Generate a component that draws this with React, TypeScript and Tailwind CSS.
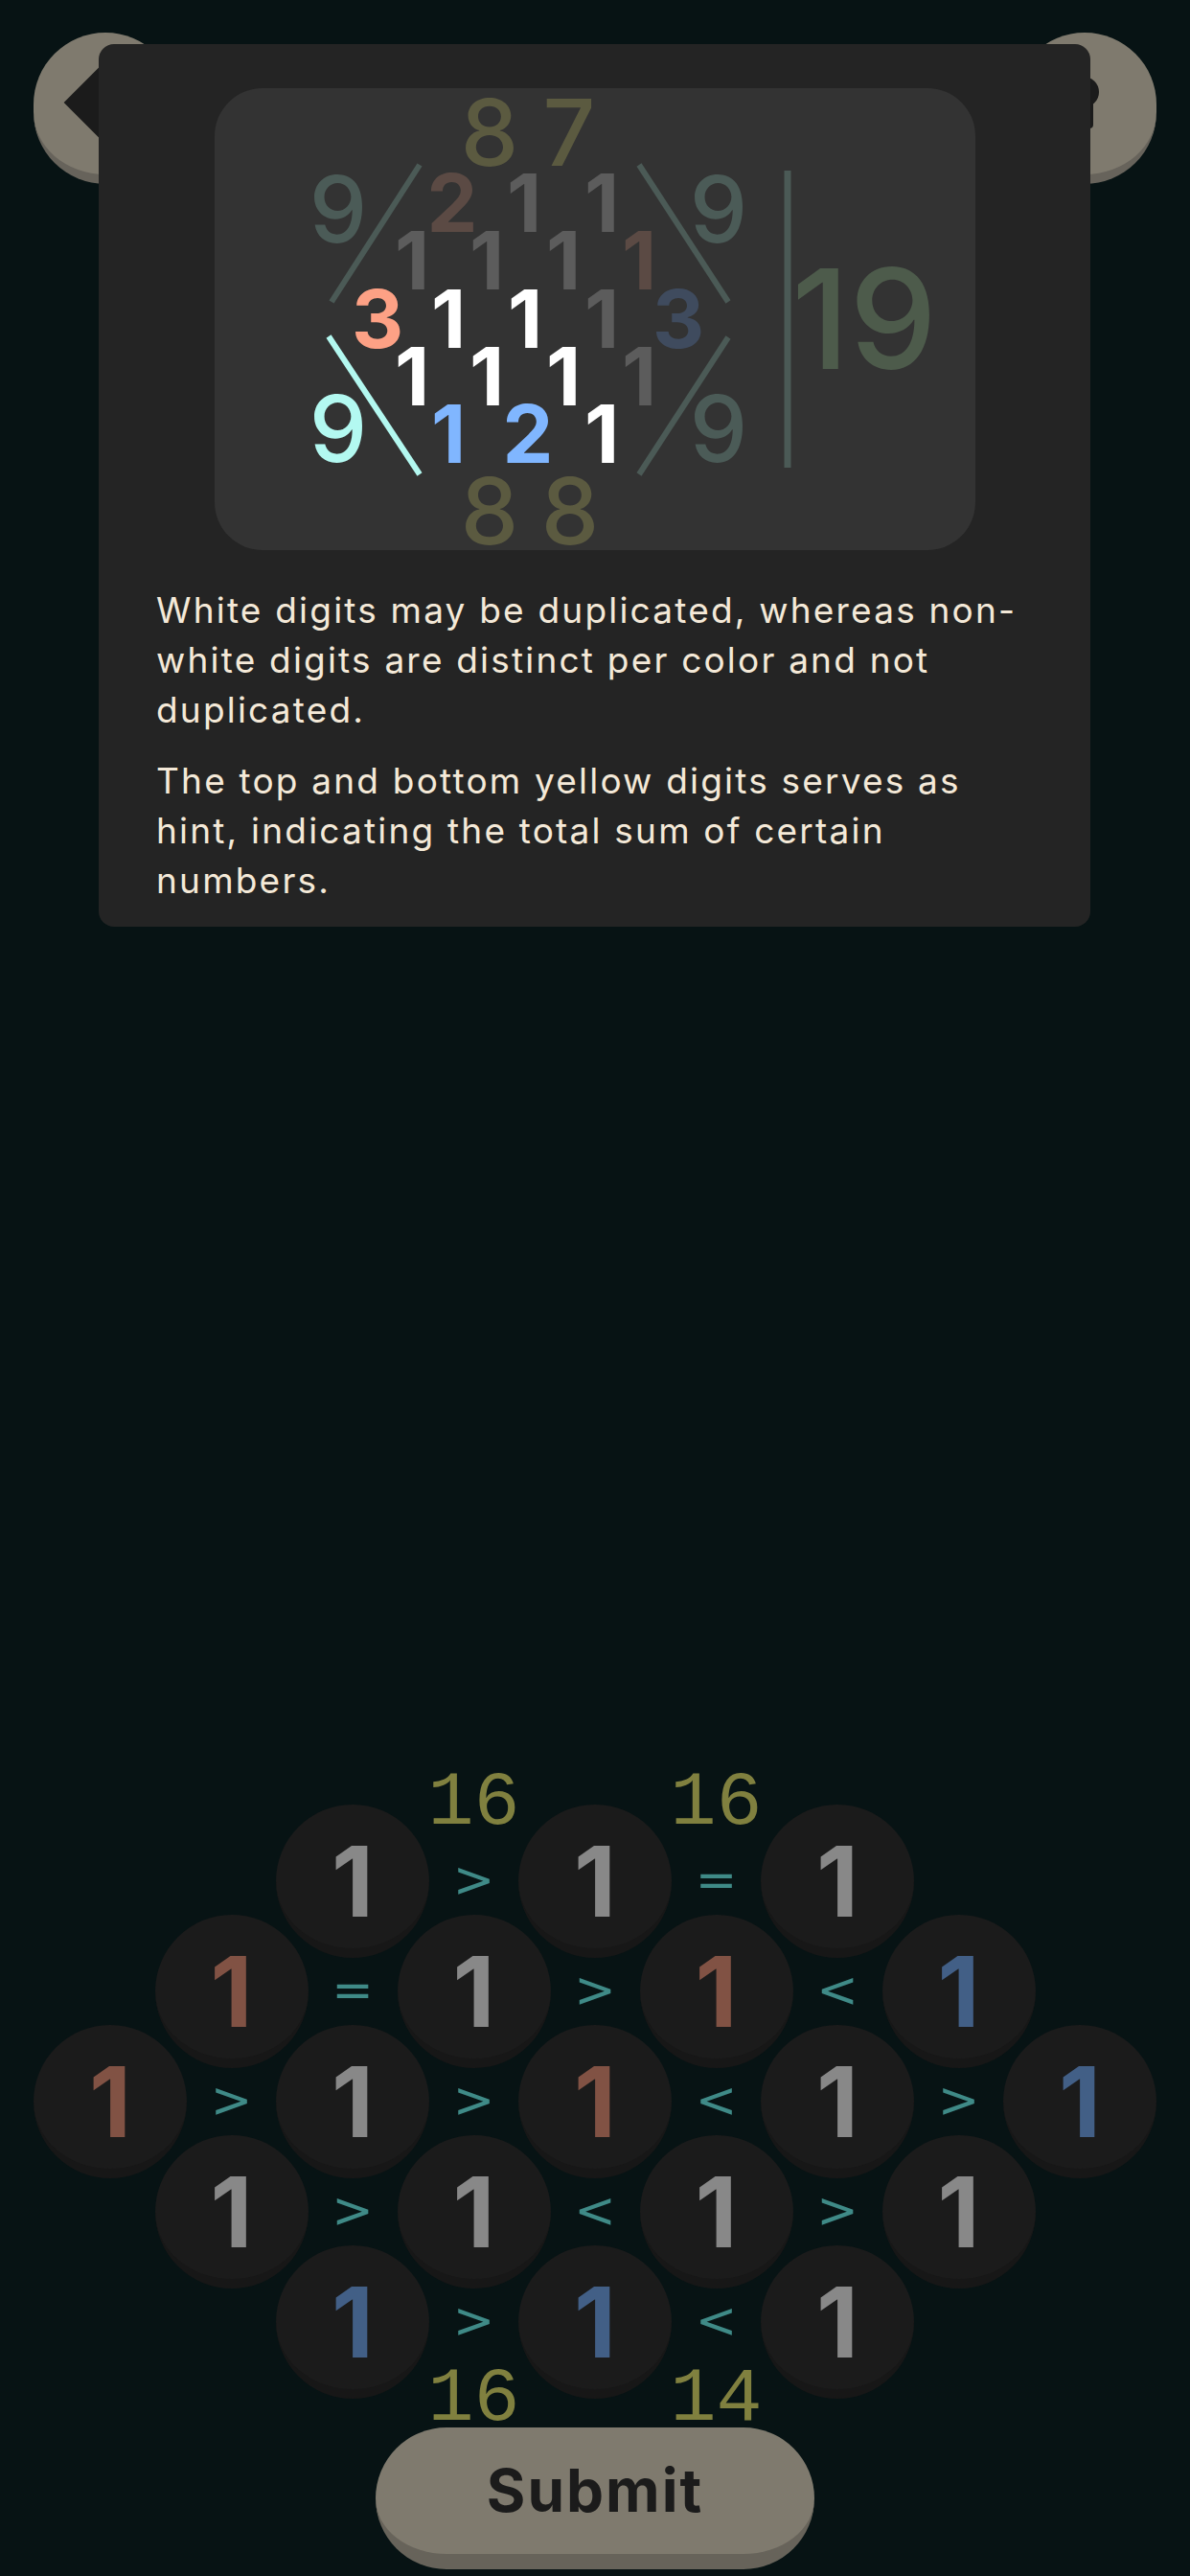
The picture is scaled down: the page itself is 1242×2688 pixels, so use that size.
import React from 'react';

type Tone = 'g' | 'r' | 'b';

const TONE: Record<Tone, string> = {
    g: 'text-[#888888]',
    r: 'text-[#815244]',
    b: 'text-[#425f86]',
};

const ROWS: { cells: Tone[]; ops: string[] }[] = [
    { cells: ['g', 'g', 'g'], ops: ['>', '='] },
    { cells: ['r', 'g', 'r', 'b'], ops: ['=', '>', '<'] },
    { cells: ['r', 'g', 'r', 'g', 'b'], ops: ['>', '>', '<', '>'] },
    { cells: ['g', 'g', 'g', 'g'], ops: ['>', '<', '>'] },
    { cells: ['b', 'b', 'g'], ops: ['>', '<'] },
];

// digits of the tutorial picture: [text, x, y, colour]
const GRID: [string, number, number, string][] = [
    ['2', 472, 242, '#5b4a44'], ['1', 547, 242, '#5c5c5c'], ['1', 628, 242, '#5c5c5c'],
    ['1', 430, 302, '#5c5c5c'], ['1', 508, 302, '#5c5c5c'], ['1', 588, 302, '#5c5c5c'], ['1', 667, 302, '#5b4a44'],
    ['3', 394, 363, '#fda185'], ['1', 468, 363, '#ffffff'], ['1', 548, 363, '#ffffff'], ['1', 628, 363, '#5c5c5c'], ['3', 708, 363, '#3f4b5e'],
    ['1', 430, 423, '#ffffff'], ['1', 508, 423, '#ffffff'], ['1', 588, 423, '#ffffff'], ['1', 667, 423, '#5c5c5c'],
    ['1', 468, 483, '#80b6ff'], ['2', 551, 483, '#80b6ff'], ['1', 628, 483, '#ffffff'],
];

const EDGE: [string, number, number, string][] = [
    ['8', 511, 173, '#5b5a40'], ['7', 594, 173, '#5b5a40'],
    ['8', 511, 568, '#5b5a40'], ['8', 595, 568, '#5b5a40'],
    ['9', 353, 253, '#4b5b57'], ['9', 353, 482, '#b3f9f1'],
    ['9', 750, 253, '#4b5b57'], ['9', 750, 482, '#4b5b57'],
];

const TutorialPicture = () => (
    <svg viewBox="224 92 794 482" className="w-[794px] h-[482px] block" style={{ fontFamily: 'Inter, sans-serif' }}>
        <rect x="224" y="92" width="794" height="482" rx="50" fill="#333333" />
        <line x1="438" y1="172" x2="346" y2="315" stroke="#4b5a56" strokeWidth="6" />
        <line x1="343" y1="351" x2="438" y2="495" stroke="#b3f8f0" strokeWidth="6" />
        <line x1="667" y1="172" x2="760" y2="315" stroke="#4b5a56" strokeWidth="6" />
        <line x1="760" y1="352" x2="667" y2="495" stroke="#4b5a56" strokeWidth="6" />
        <line x1="822" y1="178" x2="822" y2="488" stroke="#4b5a56" strokeWidth="7" />
        {EDGE.map(([t, x, y, c], i) => (
            <text key={'e' + i} x={x} y={y} fill={c} fontSize="96" fontWeight="500" textAnchor="middle">{t}</text>
        ))}
        {GRID.map(([t, x, y, c], i) => (
            <text key={'g' + i} x={x} y={y} fill={c} fontSize="84" fontWeight="700" textAnchor="middle">{t}</text>
        ))}
        <text x="902" y="385" fill="#4d5b4b" fontSize="145" fontWeight="500" textAnchor="middle">19</text>
    </svg>
);

const Cell = ({ tone }: { tone: Tone }) => (
    <div className="w-[160px] h-[160px] shrink-0 rounded-full bg-[#1b1b1b] border-b-[10px] border-[#171717] flex items-center justify-center pt-[10px]">
        <span className={`font-['Inter',sans-serif] font-bold text-[102px] leading-none ${TONE[tone]}`}>1</span>
    </div>
);

const Op = ({ sign }: { sign: string }) => (
    <div className="w-[93px] h-[160px] shrink-0 flex items-center justify-center pb-[4px]">
        <span className="font-['DejaVu_Sans',sans-serif] text-[52px] leading-none text-[#3f8a87]">{sign}</span>
    </div>
);

const Hints = ({ values }: { values: string[] }) => (
    <div className="flex justify-center h-[41px] font-['Liberation_Mono',monospace] text-[80px] leading-[80px] text-[#80803f]">
        {values.map((v, i) => (
            <div key={i} className="w-[253px] text-center">{v}</div>
        ))}
    </div>
);

export default function App() {
    return (
        <div className="relative w-[1242px] h-[2688px] bg-[#071314] overflow-hidden flex flex-col justify-between">
            {/* top bar */}
            <header className="flex justify-between px-[35px] pt-[34px]">
                <button className="w-[150px] h-[158px] rounded-full bg-[#7f7a6e] border-b-[10px] border-[#67635b] relative">
                    <svg className="absolute left-0 top-0" width="150" height="148" viewBox="0 0 150 148">
                        <polyline points="88,35 50,73 88,111" fill="none" stroke="#1b1b1b" strokeWidth="26" strokeLinejoin="miter" />
                    </svg>
                </button>
                <button className="w-[150px] h-[158px] rounded-full bg-[#7f7a6e] border-b-[10px] border-[#67635b] relative">
                    <svg className="absolute left-0 top-0" width="150" height="148" viewBox="0 0 150 148">
                        <circle cx="74" cy="62" r="16" fill="#1b1b1b" />
                        <rect x="64" y="70" width="20" height="30" rx="4" fill="#1b1b1b" />
                    </svg>
                </button>
            </header>

            {/* board */}
            <div className="flex flex-col items-center pb-[7px]">
                <Hints values={['16', '16']} />
                {ROWS.map((row, r) => (
                    <div key={r} className="h-[115px] flex items-start justify-center">
                        {row.cells.map((tone, i) => (
                            <React.Fragment key={i}>
                                {i > 0 && <Op sign={row.ops[i - 1]} />}
                                <Cell tone={tone} />
                            </React.Fragment>
                        ))}
                    </div>
                ))}
                <div className="mt-[6px] h-[69px] w-full">
                    <Hints values={['16', '14']} />
                </div>
                <button className="w-[458px] h-[148px] rounded-full bg-[#7f7a6e] border-b-[16px] border-[#67635a] flex items-center justify-center">
                    <span className="font-['Inter',sans-serif] font-bold text-[62px] leading-none tracking-[2px] text-[#1b1b1b]">Submit</span>
                </button>
            </div>

            {/* tutorial dialog */}
            <div className="absolute left-[103px] top-[46px] w-[1035px] rounded-[16px] bg-[#242424] pt-[46px] pb-[22px]">
                <div className="flex justify-center">
                    <TutorialPicture />
                </div>
                <div className="mt-[37px] px-[60px] font-['Inter',sans-serif] text-[37px] leading-[52px] tracking-[2.2px] text-[#f4e9d8]">
                    <p>White digits may be duplicated, whereas non-white digits are distinct per color and not duplicated.</p>
                    <p className="mt-[22px]">The top and bottom yellow digits serves as hint, indicating the total sum of certain numbers.</p>
                </div>
            </div>
        </div>
    );
}
